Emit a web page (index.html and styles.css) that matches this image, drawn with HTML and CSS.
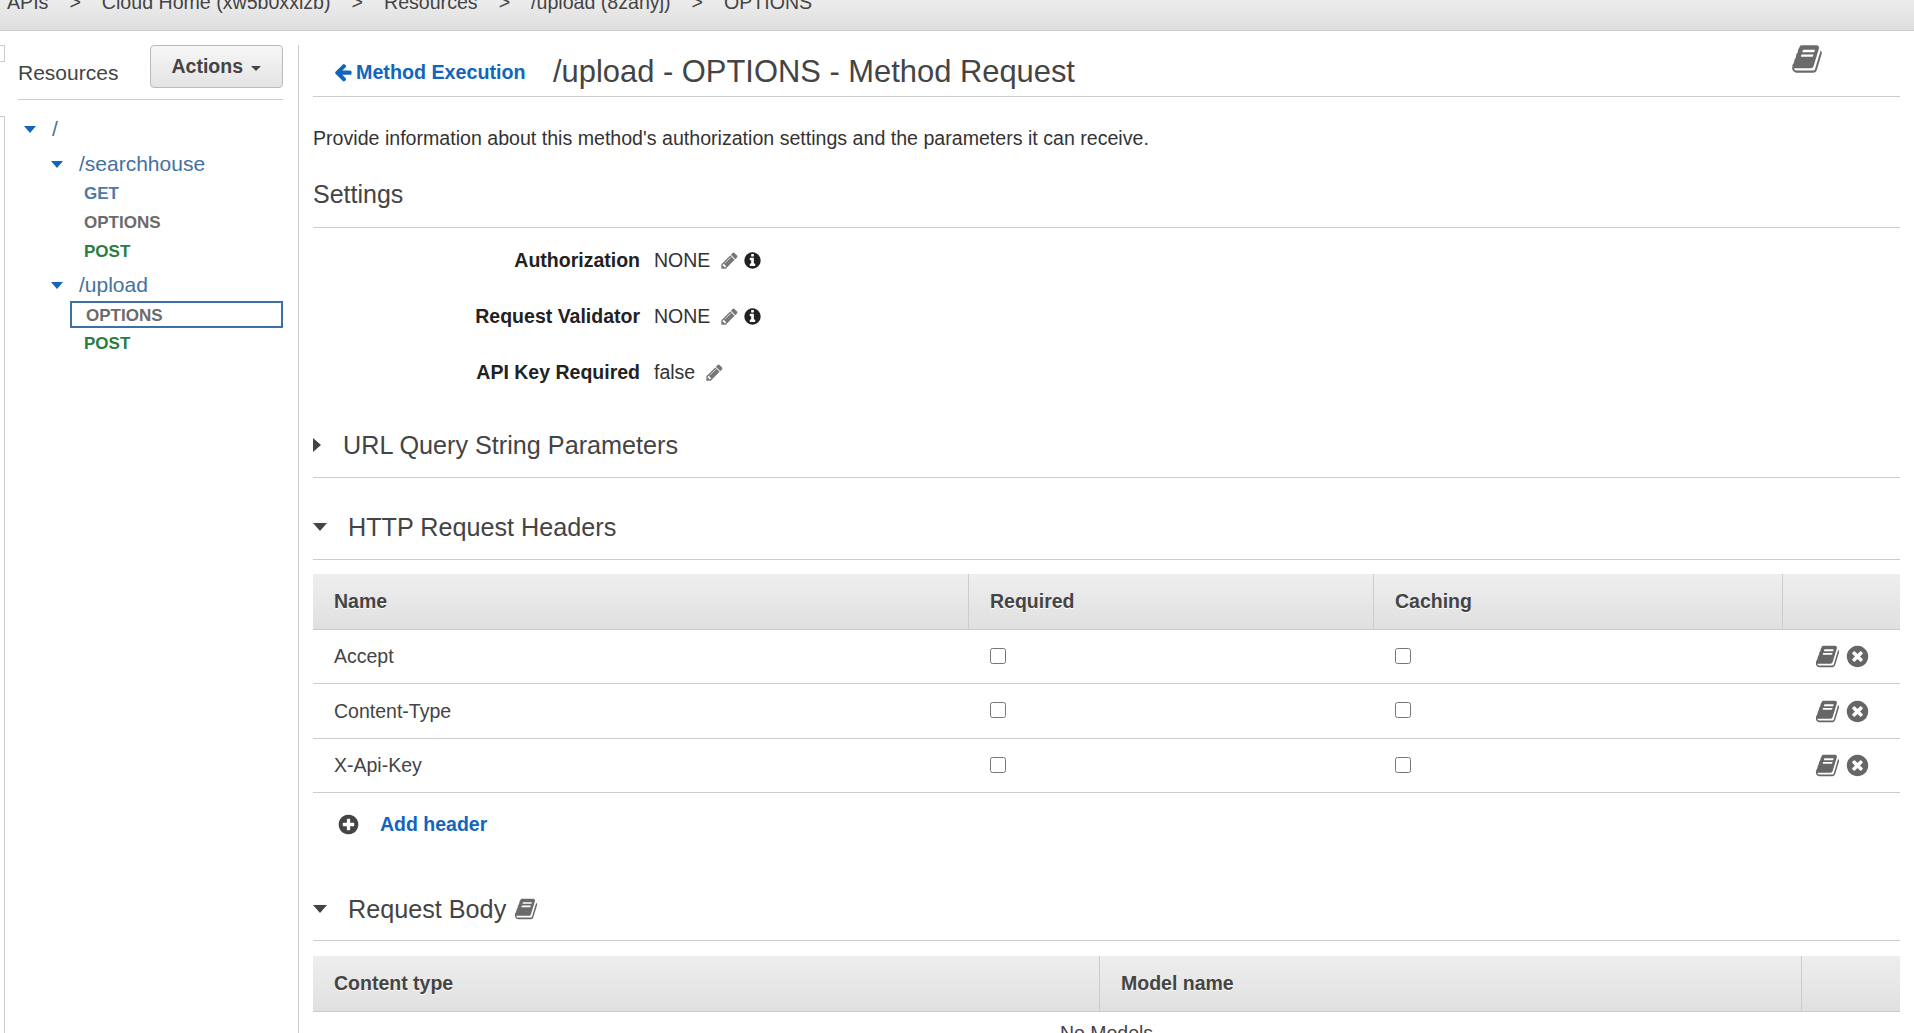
FILE: index.html
```html
<!DOCTYPE html>
<html lang="en">
  <head>
    <meta charset="utf-8" />
    <title>API Gateway - Method Request</title>
    <link rel="stylesheet" href="styles.css">
  </head>
  <body>
    <!-- icon set, used below with <use> -->
    <svg class="icon-defs" xmlns="http://www.w3.org/2000/svg">
      <symbol id="i-book" viewBox="0 0 1792 1792"><path d="M1703 478q40 57 18 129l-275 906q-19 64-76.500 107.500t-122.500 43.500h-923q-77 0-148.500-53.500t-99.500-131.500q-24-67-2-127 0-4 3-27t4-37q1-8-3-21.500t-3-19.500q2-11 8-21t16.500-23.500 16.500-23.500q23-38 45-91.500t30-91.500q3-10 .5-30t-.5-28q3-11 17-28t17-23q21-36 42-92t25-90q1-9-2.500-32t.5-28q4-13 22-30.500t22-22.500q19-26 42.500-84.500t27.500-96.500q1-8-3-25.500t-2-26.500q2-8 9-18t18-23 17-21q8-12 16.500-30.500t15-35 16-36 19.500-32 26.500-23.500 36-11.500 47.500 5.500l-1 3q38-9 51-9h761q74 0 114 56t18 130l-274 906q-36 119-71.500 153.500t-128.500 34.500h-869q-27 0-38 15-11 16-1 43 24 70 144 70h923q29 0 56-15.500t35-41.500l300-987q7-22 5-57 38 15 59 43zm-1064 2q-4 13 2 22.500t20 9.500h608q13 0 25.500-9.500t16.500-22.500l21-64q4-13-2-22.500t-20-9.500h-608q-13 0-25.500 9.500t-16.500 22.500zm-83 256q-4 13 2 22.500t20 9.500h608q13 0 25.500-9.500t16.500-22.500l21-64q4-13-2-22.500t-20-9.500h-608q-13 0-25.500 9.500t-16.500 22.500z"/></symbol>
      <symbol id="i-pencil" viewBox="0 0 1792 1792"><path d="M491 1536l91-91-235-235-91 91v107h128v128h107zm523-928q0-22-22-22-10 0-17 7l-542 542q-7 7-7 17 0 22 22 22 10 0 17-7l542-542q7-7 7-17zm-54-192l416 416-832 832h-416v-416zm683 96q0 53-37 90l-166 166-416-416 166-165q36-38 90-38 53 0 91 38l235 234q37 39 37 91z"/></symbol>
      <symbol id="i-info" viewBox="0 0 1792 1792"><path d="M1152 1376v-160q0-14-9-23t-23-9h-96v-512q0-14-9-23t-23-9h-320q-14 0-23 9t-9 23v160q0 14 9 23t23 9h96v320h-96q-14 0-23 9t-9 23v160q0 14 9 23t23 9h448q14 0 23-9t9-23zm-128-896v-160q0-14-9-23t-23-9h-192q-14 0-23 9t-9 23v160q0 14 9 23t23 9h192q14 0 23-9t9-23zm640 416q0 209-103 385.500t-279.500 279.500-385.500 103-385.500-103-279.500-279.500-103-385.500 103-385.500 279.500-279.500 385.500-103 385.500 103 279.500 279.500 103 385.500z"/></symbol>
      <symbol id="i-close" viewBox="0 0 1792 1792"><path d="M1277 1122q0-26-19-45l-181-181 181-181q19-19 19-45 0-27-19-46l-90-90q-19-19-46-19-26 0-45 19l-181 181-181-181q-19-19-45-19-27 0-46 19l-90 90q-19 19-19 46 0 26 19 45l181 181-181 181q-19 19-19 45 0 27 19 46l90 90q19 19 46 19 26 0 45-19l181-181 181 181q19 19 45 19 27 0 46-19l90-90q19-19 19-46zm387-226q0 209-103 385.500t-279.500 279.500-385.500 103-385.500-103-279.500-279.500-103-385.500 103-385.500 279.500-279.500 385.500-103 385.500 103 279.500 279.500 103 385.500z"/></symbol>
      <symbol id="i-plus" viewBox="0 0 1792 1792"><path d="M1344 960v-128q0-26-19-45t-45-19h-256v-256q0-26-19-45t-45-19h-128q-26 0-45 19t-19 45v256h-256q-26 0-45 19t-19 45v128q0 26 19 45t45 19h256v256q0 26 19 45t45 19h128q26 0 45-19t19-45v-256h256q26 0 45-19t19-45zm320-64q0 209-103 385.500t-279.500 279.500-385.500 103-385.500-103-279.500-279.500-103-385.500 103-385.500 279.500-279.500 385.500-103 385.500 103 279.500 279.500 103 385.500z"/></symbol>
      <symbol id="i-back" viewBox="0 0 1792 1792"><path d="M1664 896v128q0 53-32.500 90.500t-84.500 37.500h-704l293 294q38 36 38 90t-38 90l-75 76q-37 37-90 37-52 0-91-37l-651-652q-37-37-37-90 0-52 37-91l651-650q38-38 91-38 52 0 90 38l75 74q38 38 38 91t-38 91l-293 293h704q52 0 84.500 37.500t32.500 90.500z"/></symbol>
    </svg>

    <div class="crumbs">
      <span>APIs</span><span>&gt;</span>
      <span>Cloud Home (xw5b0xxlzb)</span><span>&gt;</span>
      <span>Resources</span><span>&gt;</span>
      <span>/upload (8zanyj)</span><span>&gt;</span>
      <span>OPTIONS</span>
    </div>

    <div class="page">
      <div class="rail">
        <div class="rail-stub"></div>
        <div class="rail-long"></div>
      </div>

      <div class="sidebar">
        <div class="side-head">
          <span class="side-title">Resources</span>
          <button class="btn-actions">Actions <i class="btn-caret"></i></button>
        </div>
        <div class="tree">
          <div class="res res-root"><i class="caret-blue"></i><a href="#">/</a></div>
          <div class="res res-child"><i class="caret-blue"></i><a href="#">/searchhouse</a></div>
          <div class="meth m-get">GET</div>
          <div class="meth m-opt">OPTIONS</div>
          <div class="meth m-post">POST</div>
          <div class="res res-child res-gap"><i class="caret-blue"></i><a href="#">/upload</a></div>
          <div class="meth m-opt selected">OPTIONS</div>
          <div class="meth m-post">POST</div>
        </div>
      </div>

      <div class="main">
        <div class="main-head">
          <a class="back" href="#"><svg class="ico-back"><use href="#i-back"/></svg>Method Execution</a>
          <h1>/upload - OPTIONS - Method Request</h1>
          <svg class="ico-docs"><use href="#i-book"/></svg>
        </div>

        <p class="intro">Provide information about this method's authorization settings and the parameters it can receive.</p>

        <h2 class="settings-title">Settings</h2>
        <div class="settings">
          <div class="set-row">
            <label>Authorization</label><span>NONE</span>
            <svg class="ico-pencil"><use href="#i-pencil"/></svg>
            <svg class="ico-info"><use href="#i-info"/></svg>
          </div>
          <div class="set-row">
            <label>Request Validator</label><span>NONE</span>
            <svg class="ico-pencil"><use href="#i-pencil"/></svg>
            <svg class="ico-info"><use href="#i-info"/></svg>
          </div>
          <div class="set-row">
            <label>API Key Required</label><span>false</span>
            <svg class="ico-pencil"><use href="#i-pencil"/></svg>
          </div>
        </div>

        <h2 class="sect sect-closed"><i class="caret-right"></i>URL Query String Parameters</h2>

        <h2 class="sect"><i class="caret-down"></i>HTTP Request Headers</h2>
        <table class="grid">
          <colgroup>
            <col class="c-name"><col class="c-req"><col class="c-cache"><col class="c-act">
          </colgroup>
          <thead>
            <tr><th>Name</th><th>Required</th><th>Caching</th><th></th></tr>
          </thead>
          <tbody>
            <tr>
              <td>Accept</td>
              <td><input type="checkbox"></td>
              <td><input type="checkbox"></td>
              <td class="acts"><svg class="ico-row"><use href="#i-book"/></svg><svg class="ico-row"><use href="#i-close"/></svg></td>
            </tr>
            <tr class="row-tall">
              <td>Content-Type</td>
              <td><input type="checkbox"></td>
              <td><input type="checkbox"></td>
              <td class="acts"><svg class="ico-row"><use href="#i-book"/></svg><svg class="ico-row"><use href="#i-close"/></svg></td>
            </tr>
            <tr>
              <td>X-Api-Key</td>
              <td><input type="checkbox"></td>
              <td><input type="checkbox"></td>
              <td class="acts"><svg class="ico-row"><use href="#i-book"/></svg><svg class="ico-row"><use href="#i-close"/></svg></td>
            </tr>
          </tbody>
        </table>

        <div class="add-row">
          <svg class="ico-plus"><use href="#i-plus"/></svg>
          <a href="#">Add header</a>
        </div>

        <h2 class="sect sect-body"><i class="caret-down"></i>Request Body<svg class="ico-body"><use href="#i-book"/></svg></h2>
        <table class="grid grid-body">
          <colgroup>
            <col class="c-type"><col class="c-model"><col class="c-end">
          </colgroup>
          <thead>
            <tr><th>Content type</th><th>Model name</th><th></th></tr>
          </thead>
          <tbody>
            <tr><td class="empty" colspan="3">No Models</td></tr>
          </tbody>
        </table>
      </div>
    </div>
  </body>
</html>
```

FILE: styles.css
```css
html,
body {
  margin: 0;
  height: 1033px;
  overflow: hidden;
}

body {
  display: flex;
  flex-direction: column;
  background: #fff;
  color: #333;
  font-family: "Liberation Sans", Arial, sans-serif;
  font-size: 17.5px;
}

a {
  text-decoration: none;
}

.icon-defs {
  display: none;
}

svg {
  fill: currentColor;
  flex: none;
}

/* top bar, the text runs off the top of the window */
.crumbs {
  flex: none;
  overflow: hidden;
  display: flex;
  align-items: flex-end;
  gap: 21px;
  padding: 0 0 18px 7px;
  box-sizing: border-box;
  height: 31px;
  background: linear-gradient(#ececec, #dedede);
  border-bottom: 1px solid #ccc;
  color: #444;
  font-size: 19.6px;
  line-height: 20px;
}

.page {
  flex: 1;
  display: flex;
  min-height: 0;
}

.rail {
  width: 5px;
  flex: none;
  display: flex;
  flex-direction: column;
  padding-top: 14px;
  box-sizing: border-box;
}

.rail-stub {
  height: 15px;
  margin-bottom: 54px;
  border: 1px solid #ccc;
  border-left: 0;
}

.rail-long {
  flex: 1;
  border-top: 1px solid #ccc;
  border-right: 1px solid #ccc;
}

/* resource tree */
.sidebar {
  width: 265px;
  flex: none;
  margin-top: 14px;
  margin-left: 13px;
  padding-right: 15px;
  border-right: 1px solid #ccc;
}

.side-head {
  height: 54px;
  display: flex;
  justify-content: space-between;
  align-items: flex-start;
  border-bottom: 1px solid #ccc;
}

.side-title {
  margin-top: 15px;
  font-size: 21px;
  line-height: 26px;
  color: #444;
}

.btn-actions {
  width: 133px;
  height: 43px;
  padding: 0 0 1px;
  border: 1px solid #bbb;
  border-radius: 4px;
  background: linear-gradient(#f7f7f7, #e3e3e3);
  color: #444;
  font: bold 19.5px "Liberation Sans", Arial, sans-serif;
}

.btn-caret {
  display: inline-block;
  margin-left: 3px;
  vertical-align: 2px;
  border-top: 5px solid #444;
  border-left: 5.5px solid transparent;
  border-right: 5.5px solid transparent;
}

.tree {
  padding-top: 15px;
}

.res {
  display: flex;
  align-items: center;
  height: 30px;
  font-size: 21px;
}

.res a {
  color: #44729f;
}

.res-root {
  height: 28px;
  margin-bottom: 6px;
  padding-left: 6px;
}

.res-child {
  padding-left: 33px;
}

.res-gap {
  margin-top: 4px;
}

.caret-blue {
  width: 0;
  margin-right: 16px;
  border-top: 7px solid #1166bb;
  border-left: 6.5px solid transparent;
  border-right: 6.5px solid transparent;
}

.meth {
  height: 29px;
  line-height: 29px;
  padding-left: 66px;
  font-size: 17px;
  font-weight: bold;
}

.m-get {
  color: #4f78a8;
}

.m-opt {
  color: #6b6b6b;
}

.m-post {
  color: #2b7d3f;
}

.meth.selected {
  height: 27px;
  line-height: 25px;
  margin: 1px 0 1px 52px;
  padding-left: 14px;
  box-sizing: border-box;
  border: 2px solid #3e6fa5;
}

/* right hand side */
.main {
  flex: 1;
  min-width: 0;
  margin: 0 14px;
}

.main-head {
  height: 66px;
  display: flex;
  align-items: center;
  box-sizing: border-box;
  padding: 17px 0 0 20px;
  border-bottom: 1px solid #ccc;
}

.back {
  display: flex;
  align-items: center;
  width: 220px;
  color: #1166bb;
  font-size: 19.7px;
  font-weight: bold;
}

.ico-back {
  width: 20px;
  height: 20px;
  margin-right: 3px;
}

h1 {
  margin: 0;
  font-size: 30.9px;
  font-weight: normal;
  color: #444;
}

.ico-docs {
  width: 32px;
  height: 32px;
  margin: -26px 77px 0 auto;
  color: #6b6b6b;
}

.intro {
  margin: 28px 0;
  line-height: 26px;
  font-size: 19.6px;
}

h2 {
  margin: 0;
  font-weight: normal;
  color: #444;
}

.settings-title {
  font-size: 25px;
  line-height: 30px;
  padding-bottom: 18px;
  border-bottom: 1px solid #ccc;
}

.settings {
  padding-top: 4px;
}

.set-row {
  height: 56px;
  display: flex;
  align-items: center;
  font-size: 19.5px;
}

.set-row label {
  width: 327px;
  margin-right: 14px;
  text-align: right;
  font-weight: bold;
  color: #222;
}

.ico-pencil {
  width: 19px;
  height: 19px;
  margin-left: 10px;
  color: #777;
}

.ico-info {
  width: 19px;
  height: 19px;
  margin-left: 4px;
  color: #222;
}

.sect {
  display: flex;
  align-items: center;
  height: 30px;
  margin-top: 34px;
  padding-bottom: 17px;
  border-bottom: 1px solid #ccc;
  font-size: 25.2px;
}

.sect-closed {
  margin-top: 30px;
}

.sect-body {
  margin-top: 38px;
  padding-bottom: 16px;
}

.caret-down {
  width: 0;
  margin-right: 21px;
  border-top: 8px solid #444;
  border-left: 7.5px solid transparent;
  border-right: 7.5px solid transparent;
}

.caret-right {
  width: 0;
  margin-right: 22px;
  border-left: 8px solid #444;
  border-top: 7.5px solid transparent;
  border-bottom: 7.5px solid transparent;
}

.ico-body {
  width: 24px;
  height: 24px;
  margin-left: 8px;
  color: #6b6b6b;
}

/* tables */
.grid {
  width: 100%;
  margin-top: 14px;
  table-layout: fixed;
  border-collapse: separate;
  border-spacing: 0;
}

.grid-body {
  margin-top: 15px;
}

.c-name {
  width: 655px;
}

.c-req {
  width: 405px;
}

.c-cache {
  width: 409px;
}

.c-type {
  width: 786px;
}

.c-model {
  width: 702px;
}

.grid th {
  box-sizing: border-box;
  height: 56px;
  padding: 0 0 1px 21px;
  background: linear-gradient(#eeeeee, #e0e0e0);
  border-bottom: 1px solid #ccc;
  border-left: 1px solid #ccc;
  text-align: left;
  font-size: 19.5px;
  color: #444;
  text-shadow: 0 1px 0 #fff;
}

.grid th:first-child {
  border-left: 0;
}

.grid td {
  box-sizing: border-box;
  height: 54px;
  padding: 0 0 0 21px;
  border-bottom: 1px solid #ccc;
  font-size: 19.5px;
  color: #444;
}

.grid .row-tall td {
  height: 55px;
}

.grid input {
  display: block;
  width: 16px;
  height: 16px;
  margin: 0 0 2px 1px;
}

.grid .acts {
  padding-left: 33px;
}

.ico-row {
  width: 25px;
  height: 25px;
  margin: 0 5px 0 0;
  vertical-align: middle;
  color: #666;
}

.grid .empty {
  height: auto;
  padding: 10px 0;
  border: 0;
  text-align: center;
}

.add-row {
  display: flex;
  align-items: center;
  height: 63px;
  padding-left: 24px;
  font-size: 19.5px;
  font-weight: bold;
}

.add-row a {
  color: #1166bb;
}

.ico-plus {
  width: 23px;
  height: 23px;
  margin-right: 20px;
  color: #444;
}
```
